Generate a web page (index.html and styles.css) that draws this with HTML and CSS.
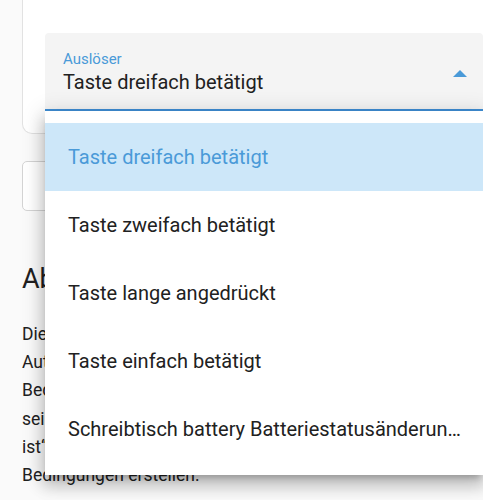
FILE: index.html
```html
<!DOCTYPE html>
<html lang="de">
<head>
<meta charset="utf-8">
<link rel="stylesheet" href="styles.css">
</head>
<body>
<div class="page">
  <div class="card">
    <div class="select">
      <div class="select-text">
        <div class="label">Auslöser</div>
        <div class="value">Taste dreifach betätigt</div>
      </div>
      <svg class="arrow" width="14" height="7" viewBox="0 0 14 7"><path d="M0 7 L7 0 L14 7 Z" fill="#4a9ad8"/></svg>
    </div>
    <ul class="menu">
      <li class="item selected">Taste dreifach betätigt</li>
      <li class="item">Taste zweifach betätigt</li>
      <li class="item">Taste lange angedrückt</li>
      <li class="item">Taste einfach betätigt</li>
      <li class="item">Schreibtisch battery Batteriestatusänderung erkannt</li>
    </ul>
  </div>
  <div class="outline-btn"></div>
  <h2 class="heading">Ablauf</h2>
  <p class="text">Die Aktionen werden ausgeführt, wenn<br>Automatisierung und alle Bedingungen<br>Bedingungen sind optional und können<br>sein, wenn das Ereignis eingetreten<br>ist“, kannst du weitere<br>Bedingungen erstellen.</p>
</div>
</body>
</html>
```

FILE: styles.css
```css
html, body {
  margin: 0;
  padding: 0;
  overflow: hidden;
}
body {
  background: #fafafa;
  font-family: Roboto, "Noto Sans", sans-serif;
  color: #212121;
  width: 483px;
  height: 500px;
}
.page {
  padding-left: 22px;
}
.card {
  position: relative;
  margin-top: -20px;
  margin-right: -1px;
  background: #fff;
  border: 1px solid #e2e2e2;
  border-top: none;
  border-radius: 0 0 10px 10px;
  padding: 53px 0 22px 22px;
}
.select {
  display: flex;
  align-items: center;
  background: #f4f4f4;
  border-radius: 4px 4px 0 0;
  border-bottom: 2px solid #3f8fd6;
  padding: 17px 16px 15px 18px;
}
.select-text {
  flex: 1;
}
.label {
  font-size: 15px;
  line-height: 18px;
  color: #4a9ad8;
  margin-bottom: 2px;
}
.value {
  font-size: 20px;
  line-height: 24px;
  color: #212121;
}
.arrow {
  display: block;
  margin-top: 2px;
}
.menu {
  position: absolute;
  left: 22px;
  top: 131px;
  width: 438px;
  margin: 0;
  padding: 12px 0 12px 0;
  list-style: none;
  background: #fff;
  box-shadow: 0 10px 14px 2px rgba(0,0,0,0.16), 0 4px 20px 4px rgba(0,0,0,0.12), 0 6px 6px -3px rgba(0,0,0,0.2);
  z-index: 2;
}
.item {
  height: 68px;
  line-height: 24px;
  font-size: 20px;
  padding: 22px 12px 22px 23px;
  box-sizing: border-box;
  white-space: nowrap;
  overflow: hidden;
  text-overflow: ellipsis;
  color: #212121;
}
.item.selected {
  background: #cde7f9;
  color: #4a9ad8;
}
.outline-btn {
  margin-top: 27px;
  width: 120px;
  height: 48px;
  border: 1px solid #d4d4d4;
  border-radius: 5px;
  background: #fff;
}
.heading {
  margin: 52px 0 0 0;
  font-size: 27px;
  line-height: 32px;
  font-weight: 400;
  color: #212121;
}
.text {
  margin: 25px 0 0 0;
  font-size: 17.5px;
  line-height: 28.2px;
  color: #212121;
  white-space: nowrap;
}
```
